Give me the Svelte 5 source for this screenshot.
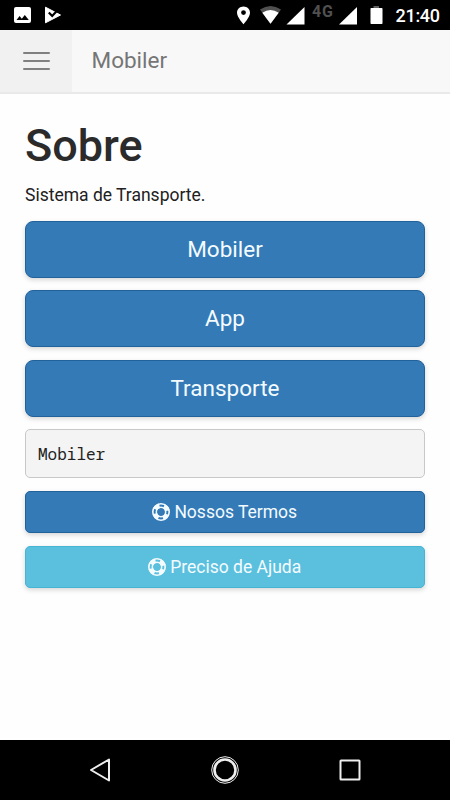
<script>
  const sections = ['Mobiler', 'App', 'Transporte']

  const links = [
    { label: 'Nossos Termos', kind: 'primary' },
    { label: 'Preciso de Ajuda', kind: 'info' }
  ]
</script>

<style>
  :global(body) {
    margin: 0;
    background: #fff;
  }

  .screen {
    display: flex;
    flex-direction: column;
    width: 450px;
    height: 800px;
    overflow: hidden;
    font-family: Roboto, sans-serif;
    color: #212121;
    background: #fefefe;
  }

  svg {
    display: block;
    flex: none;
  }

  .status {
    display: flex;
    flex: none;
    height: 30px;
    background: #000;
  }

  .clock {
    font-size: 18px;
    font-weight: 500;
    fill: #fff;
  }

  .network {
    font-size: 16px;
    font-weight: 700;
    fill: #505050;
  }

  header {
    display: flex;
    flex: none;
    box-sizing: border-box;
    height: 64px;
    background: #f8f8f8;
    border-bottom: 2px solid #e9e9e9;
  }

  .menu {
    display: flex;
    flex-direction: column;
    align-items: center;
    justify-content: center;
    gap: 6px;
    width: 72px;
    padding: 0;
    border: 0;
    background: #f1f1f1;
  }

  .menu span {
    width: 27px;
    height: 2px;
    border-radius: 1px;
    background: #808080;
  }

  .title {
    padding-left: 19.5px;
    font-size: 22.5px;
    line-height: 61px;
    color: #757575;
  }

  main {
    flex: 1;
    padding: 26px 25px 0;
  }

  h1 {
    margin: 0;
    font-size: 45px;
    font-weight: 500;
    line-height: 52px;
    color: #2b2b2b;
  }

  p {
    margin: 10.6px 0 13.1px;
    font-size: 17.5px;
    line-height: 25px;
  }

  .btn {
    display: flex;
    align-items: center;
    justify-content: center;
    gap: 4.5px;
    box-sizing: border-box;
    width: 100%;
    height: 42.5px;
    margin: 0 0 12.5px;
    padding: 0 1px 0 0;
    border: 1px solid #22629b;
    border-radius: 5px;
    font: 17.5px Roboto, sans-serif;
    color: #f4fbff;
    background: #337ab7;
    box-shadow: 0 2px 5px rgba(0, 0, 0, 0.16);
  }

  .large {
    height: 57px;
    padding: 0 0 1px;
    border-radius: 8px;
    font-size: 22.5px;
  }

  .info {
    border-color: #46b4d3;
    background: #5bc0de;
  }

  pre {
    box-sizing: border-box;
    height: 48.8px;
    margin: 0 0 12.7px;
    padding: 0 12px;
    border: 1px solid #c8c8c8;
    border-radius: 5px;
    font: 16px/48px "Droid Sans Mono", "Noto Sans Mono", "DejaVu Sans Mono", monospace;
    color: #222;
    background: #f4f4f4;
  }

  .keys {
    display: flex;
    flex: none;
    justify-content: center;
    height: 60px;
    background: #000;
  }
</style>

<div class="screen">
  <div class="status">
    <svg width="450" height="30" viewBox="0 0 450 30" fill="#fff">
      <path fill-rule="evenodd" d="M16 7h13q2 0 2 2v12q0 2-2 2H16q-2 0-2-2V9q0-2 2-2zm.5 13h12.3l-4-5-3 3.7-2.2-2.6z" />
      <path d="M45.5 7.2L60.5 15 45.5 22.8z" stroke="#fff" stroke-width="1" stroke-linejoin="round" />
      <path d="M48.8 12.4l3.4 3.6 6-6.6" fill="none" stroke="#000" stroke-width="2.2" />
      <path fill-rule="evenodd" d="M243.5 6.4c-3.7 0-6.5 2.8-6.5 6.3 0 4.5 6.5 11.5 6.5 11.5s6.5-7 6.5-11.5c0-3.5-2.8-6.3-6.5-6.3zm0 3.8a2.4 2.4 0 1 1 0 4.8 2.4 2.4 0 0 1 0-4.8z" />
      <path d="M260 9.6q10.5-7.2 21 0L270.5 23.7z" fill="#505050" />
      <path d="M262.3 12.7q8.2-5.4 16.4 0L270.5 23.7z" />
      <path d="M304.5 7v17.5h-18z" />
      <text class="network" x="312" y="16.5" textLength="21">4G</text>
      <path d="M357 7v17.5h-18z" />
      <path d="M373.5 6h5.5v2.5h-5.5z" fill="#606060" />
      <rect x="370.5" y="8" width="12" height="16" rx="0.8" />
      <text class="clock" x="395.5" y="22" textLength="44.5">21:40</text>
    </svg>
  </div>

  <header>
    <button class="menu" aria-label="Menu">
      <span></span>
      <span></span>
      <span></span>
    </button>
    <div class="title">Mobiler</div>
  </header>

  <main>
    <h1>Sobre</h1>
    <p>Sistema de Transporte.</p>

    {#each sections as section}
      <button class="btn large">{section}</button>
    {/each}

    <pre>Mobiler</pre>

    {#each links as link}
      <button class="btn" class:info={link.kind === 'info'}>
        <svg width="18" height="18" viewBox="0 0 18 18" fill="none" stroke="#f4fbff">
          <circle cx="9" cy="9" r="8.2" stroke-width="1.6" />
          <circle cx="9" cy="9" r="4.7" stroke-width="1.5" />
          <circle cx="9" cy="9" r="6.4" stroke-width="4.6" stroke-dasharray="5.4 4.653" stroke-dashoffset="-2.327" />
        </svg>
        {link.label}
      </button>
    {/each}
  </main>

  <div class="keys">
    <svg width="450" height="60" viewBox="0 0 450 60" fill="none" stroke="#eee" stroke-width="2" stroke-linejoin="round">
      <path d="M109 19.5v21L91 30z" />
      <circle cx="225" cy="30" r="13.3" stroke-width="1" />
      <circle cx="225" cy="30" r="10.5" stroke-width="2.6" />
      <rect x="340.5" y="20.5" width="19" height="19" rx="0.5" />
    </svg>
  </div>
</div>
